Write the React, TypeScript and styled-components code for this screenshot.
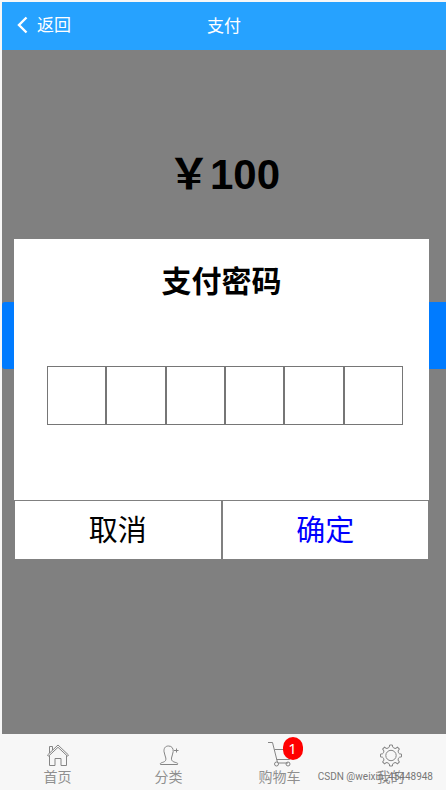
import React from "react";
import styled, { createGlobalStyle } from "styled-components";

const GlobalStyle = createGlobalStyle`
  *, *::before, *::after { box-sizing: border-box; }
  html, body, #root { height: 100%; }
  body {
    margin: 0;
    background: #f7f7f7;
    color: #000;
    font-family: "Noto Sans", "Noto Sans CJK SC", sans-serif;
  }
  button, input { font-family: inherit; }
`;

const Page = styled.div`
  min-height: 100%;
  display: flex;
  flex-direction: column;
  padding: 2px 0 0 2px;
`;

const Header = styled.header`
  display: grid;
  grid-template-columns: 1fr auto 1fr;
  align-items: center;
  height: 48px;
  padding: 0 15px;
  background: #26a2ff;
  color: #fff;
`;

const BackButton = styled.button`
  display: flex;
  align-items: center;
  justify-self: start;
  gap: 9px;
  padding: 0 0 2px;
  border: 0;
  background: none;
  color: inherit;
  font-size: 17px;
  line-height: 24px;
`;

const Title = styled.h1`
  margin: 0;
  font-size: 17px;
  font-weight: 400;
  line-height: 24px;
`;

const Content = styled.main`
  flex: 1;
  display: grid;
  grid-template-rows: 252px 67px 1fr;
  background: #808080;
`;

const Amount = styled.p`
  grid-area: 1 / 1;
  margin: 0;
  padding: 100px 0 0;
  text-align: center;
  font-family: "Liberation Sans", "Noto Sans CJK SC", sans-serif;
  font-size: 42px;
  font-weight: 700;
  line-height: 50px;
`;

const PayButton = styled.button`
  grid-area: 2 / 1;
  border: 0;
  border-radius: 3px 0 0 3px;
  background: #007bff;
`;

const Dialog = styled.section`
  grid-area: 1 / 1 / 4 / 2;
  align-self: start;
  position: relative;
  display: flex;
  flex-direction: column;
  margin: 189px 17px 0 12px;
  background: #fff;
`;

const DialogTitle = styled.h2`
  margin: 0;
  padding: 20px 0 63px;
  text-align: center;
  font-size: 30px;
  line-height: 44px;
`;

const Digits = styled.div`
  display: grid;
  grid-template-columns: repeat(6, 1fr);
  margin: 0 26px 75px 33px;
`;

const Digit = styled.input`
  width: 100%;
  min-width: 0;
  height: 59px;
  border: 1px solid #767676;
  border-radius: 0;
  background: #fff;
  text-align: center;
  font-size: 30px;
`;

const Actions = styled.div`
  display: grid;
  grid-template-columns: 1fr 1fr;
`;

const Action = styled.button<{ $color: string }>`
  height: 60px;
  padding: 0;
  border: 1px solid #808080;
  background: #fff;
  color: ${(p) => p.$color};
  font-size: 29px;
  line-height: 44px;
`;

const TabBar = styled.nav`
  position: relative;
  display: grid;
  grid-template-columns: repeat(4, 1fr);
  height: 56px;
  background: #f7f7f7;
`;

const Tab = styled.a`
  display: flex;
  flex-direction: column;
  align-items: center;
  justify-content: flex-end;
  padding-bottom: 3px;
  color: #8f8f8f;
  font-size: 14px;
  line-height: 20px;
  text-decoration: none;
`;

const IconBox = styled.span`
  position: relative;
  display: flex;
  svg {
    fill: none;
    stroke: #858585;
    stroke-linejoin: round;
  }
`;

const Badge = styled.span`
  position: absolute;
  top: -4px;
  left: 15px;
  min-width: 20px;
  height: 23px;
  border-radius: 12px;
  background: #f00;
  color: #fff;
  text-align: center;
  font-size: 15px;
  line-height: 22px;
`;

const Watermark = styled.small`
  position: absolute;
  right: 13px;
  bottom: 6px;
  color: #777;
  font-family: Roboto, sans-serif;
  font-size: 10px;
  line-height: 14px;
  pointer-events: none;
`;

const ChevronIcon = () => (
  <svg width="11" height="18" viewBox="0 0 11 18" fill="none" stroke="#fff" strokeWidth="2.400" aria-hidden="true">
    <path d="M9.500 1.500 2 9l7.500 7.500" />
  </svg>
);

const HomeIcon = () => (
  <svg width="24" height="24" viewBox="0 0 24 24" aria-hidden="true">
    <path d="M1.500 12 12 2l10.500 10-1 1.200L12 4.300 2.500 13.200z" />
    <path d="M3.500 12.500v10h5.500v-7h6v7h5.500v-10M3.500 10V3.500h3V7" />
  </svg>
);

const PersonIcon = () => (
  <svg width="24" height="24" viewBox="0 0 24 24" aria-hidden="true">
    <path d="M11.500 3C8 3 6.800 5.500 7 8.500c.2 2.500 1.500 4.500 1.800 6.500.4 2.800-.8 3.800-4.300 4.700-1 .3-1.500 1-1 1.800h17c.5-1 0-1.500-1-1.800-3.800-.9-5.300-1.900-5-4.700.2-2 1.500-4 1.700-6.500C16.400 5.500 15 3 11.500 3zM17 7.500h4.500M19.500 5.500v4" />
  </svg>
);

const CartIcon = () => (
  <svg width="24" height="26" viewBox="0 0 24 26" aria-hidden="true">
    <path d="M0 1.500h4.500l5 20M6.500 8.500H22M8.500 18.500h13l1-5M10 22h10" />
    <circle cx="8.500" cy="23" r="2" />
    <circle cx="20" cy="23" r="2" />
  </svg>
);

const teeth = [0, 45, 90, 135, 180, 225, 270, 315];

const GearIcon = () => (
  <svg width="24" height="24" viewBox="0 0 24 24" aria-hidden="true">
    {teeth.map((angle) => (
      <path
        key={angle}
        transform={`rotate(${angle} 12 12.500)`}
        d="M8.900 5 Q10 4.700 10.300 4 L10.600 2 H13.400 L13.700 4 Q14 4.700 15.100 5"
      />
    ))}
    <circle cx="12" cy="12.500" r="5.200" />
  </svg>
);

const tabs = [
  { label: "首页", icon: <HomeIcon /> },
  { label: "分类", icon: <PersonIcon /> },
  { label: "购物车", icon: <CartIcon />, count: 1 },
  { label: "我的", icon: <GearIcon /> },
];

export default function App() {
  return (
    <Page>
      <GlobalStyle />
      <Header>
        <BackButton type="button">
          <ChevronIcon />
          返回
        </BackButton>
        <Title>支付</Title>
      </Header>
      <Content>
        <Amount>￥100</Amount>
        <PayButton type="button" aria-label="支付" />
        <Dialog role="dialog" aria-labelledby="pay-title">
          <DialogTitle id="pay-title">支付密码</DialogTitle>
          <Digits>
            {[1, 2, 3, 4, 5, 6].map((n) => (
              <Digit key={n} type="password" inputMode="numeric" maxLength={1} aria-label={`支付密码 ${n}`} />
            ))}
          </Digits>
          <Actions>
            <Action type="button" $color="#000">取消</Action>
            <Action type="button" $color="#00f">确定</Action>
          </Actions>
        </Dialog>
      </Content>
      <TabBar>
        {tabs.map((tab) => (
          <Tab key={tab.label} href="#">
            <IconBox>
              {tab.icon}
              {tab.count && <Badge>{tab.count}</Badge>}
            </IconBox>
            {tab.label}
          </Tab>
        ))}
        <Watermark>CSDN @weixin_45448948</Watermark>
      </TabBar>
    </Page>
  );
}
